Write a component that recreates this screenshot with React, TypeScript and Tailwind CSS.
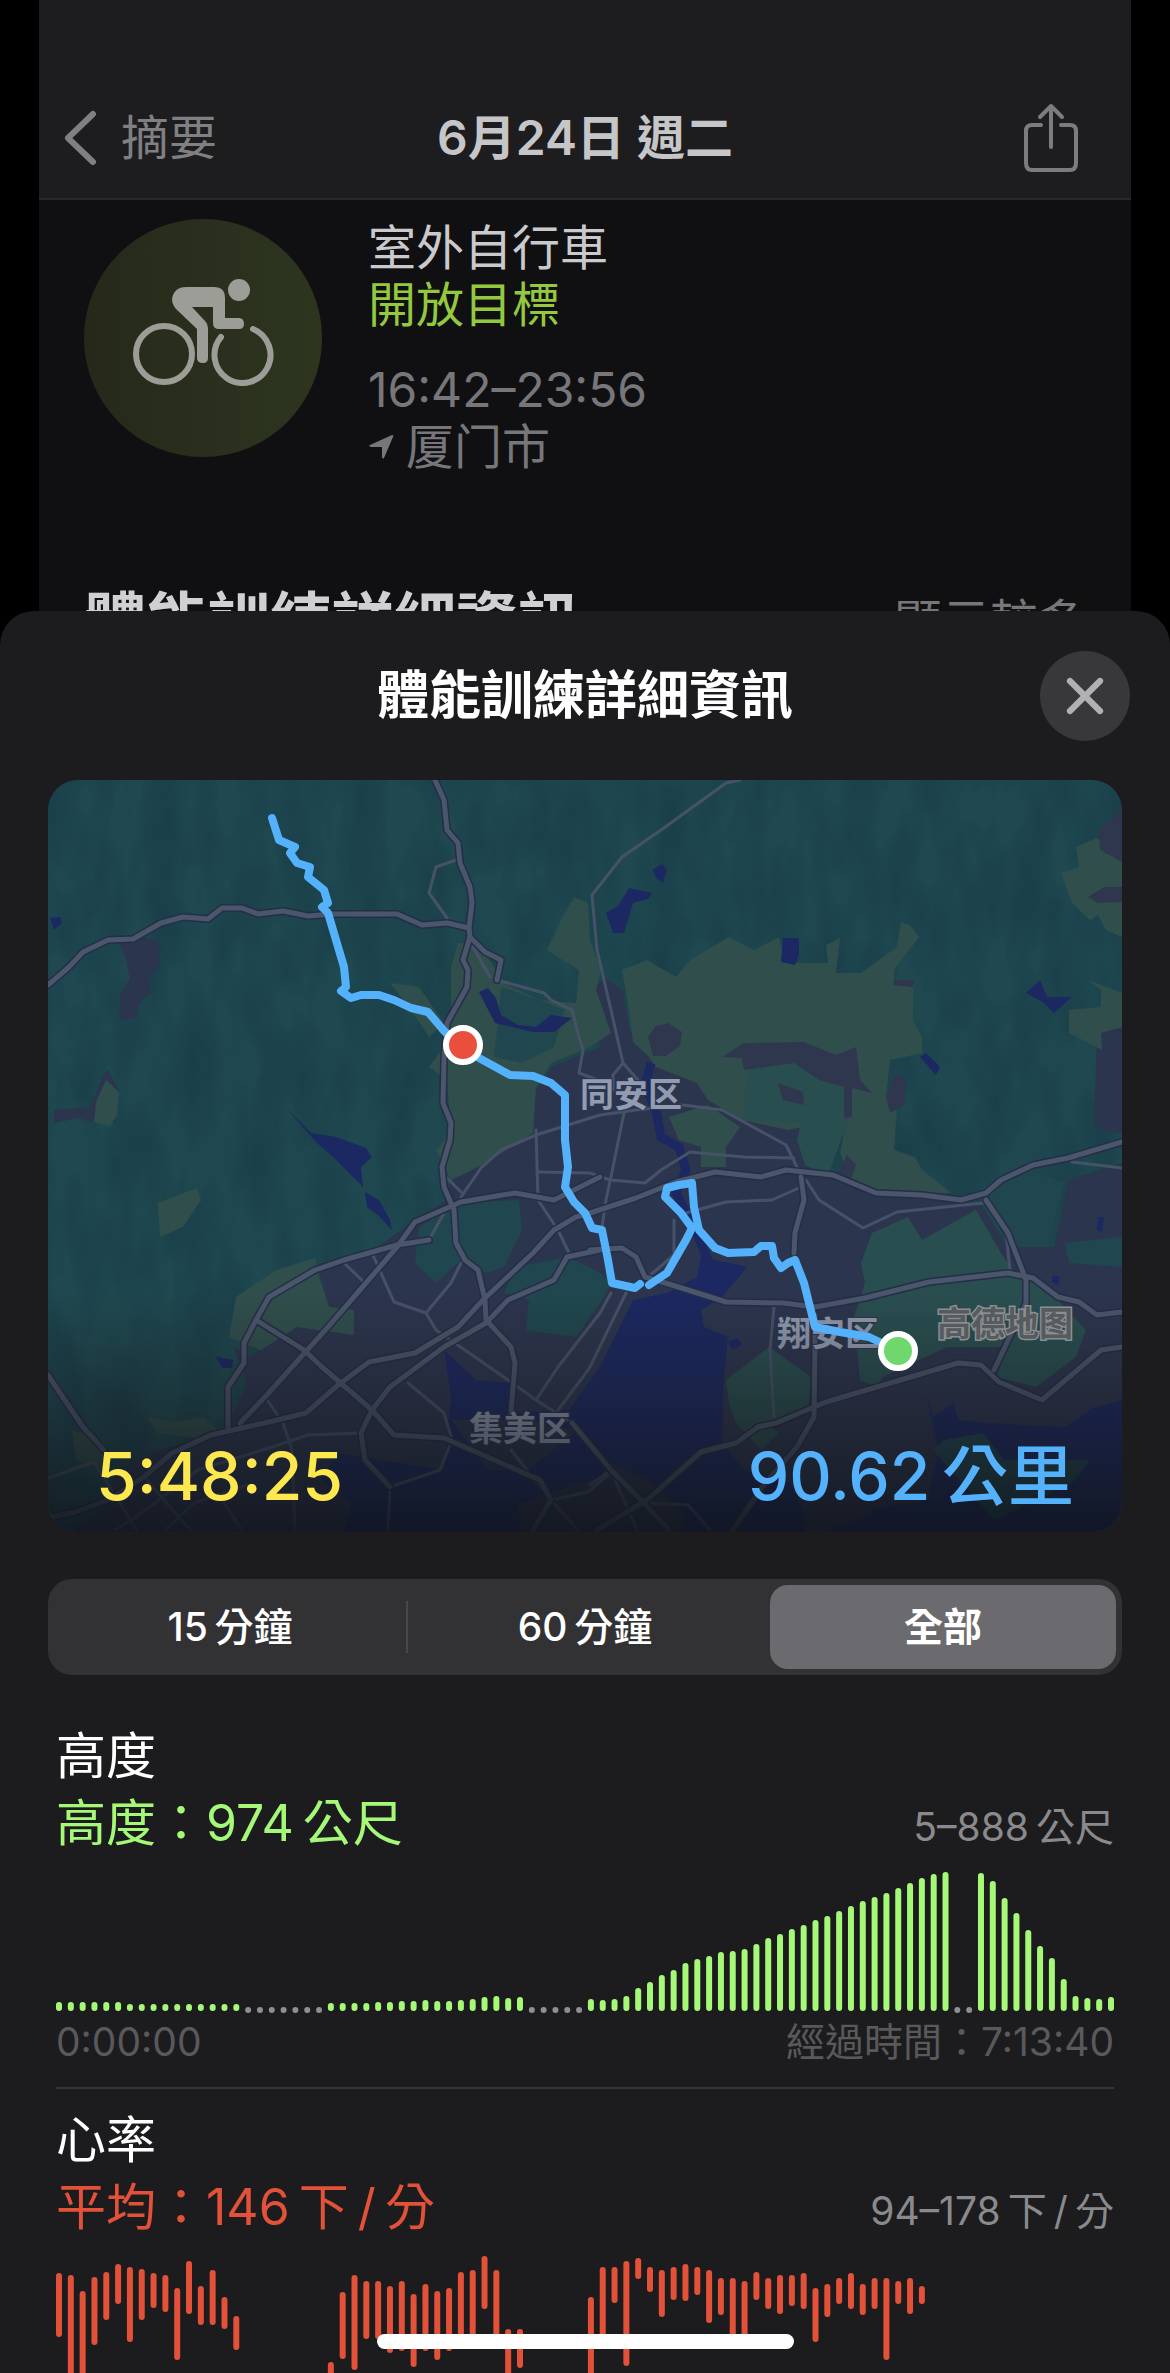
import { X } from "lucide-react"

type Range = [number, number] | null

const altitude = [
  9, 9, 9, 9, 9, 9, 7, 7, 7, 7, 7, 7, 7, 7, 7, 7, 0, 0, 0, 0, 0, 0, 0, 8, 8, 8, 8, 9, 9, 10, 10, 11, 10, 10, 11, 12,
  14, 15, 13, 14, 0, 0, 0, 0, 0, 12, 11, 12, 15, 23, 29, 36, 41, 48, 52, 55, 59, 60, 62, 67, 73, 77, 82, 86, 91, 95,
  100, 105, 110, 114, 118, 123, 128, 133, 137, 139, 0, 0, 138, 130, 113, 98, 81, 65, 53, 32, 15, 13, 12, 14,
]

// top and bottom of every heart rate bar, null where nothing was recorded
const heartRate: Range[] = [
  [17, 81], [19, 130], [35, 130], [21, 89], [16, 64], [8, 48], [11, 86], [13, 64], [17, 52], [19, 56], [32, 104],
  [5, 58], [30, 69], [14, 69], [41, 73], [60, 94], null, null, null, null, null, null, null, [106, 130], [36, 103],
  [19, 114], [25, 83], [25, 83], [30, 97], [25, 95], [38, 111], [28, 95], [35, 104], [32, 95], [16, 85], [14, 85],
  [0, 53], [14, 85], [73, 130], [73, 112], null, null, null, null, null, [41, 130], [11, 85], [11, 47], [5, 110],
  [2, 23], [11, 36], [14, 61], [11, 44], [8, 45], [11, 39], [14, 67], [22, 59], [22, 85], [25, 85], [16, 44],
  [22, 53], [19, 58], [19, 50], [17, 53], [32, 86], [28, 61], [22, 48], [17, 53], [28, 59], [22, 53], [22, 104],
  [25, 48], [22, 58], [30, 48],
]

const chartWidth = 1058
const barStep = (chartWidth - 6) / 89

const urban = [
  "528,277 552,267 545,210 556,197 574,210 583,253 604,277 608,287 649,303 660,320 694,340 753,343 749,360 760,387 803,400 828,413 903,417 935,427 960,467 1006,467 1021,400 1074,383 1074,752 28,752 50,730 70,690 110,670 160,657 178,650 199,603 185,567 203,577 249,547 306,555 306,530 281,527 271,490 321,473 363,443 399,420 403,400 438,383 485,353 488,310 503,287",
  "71,162 85,155 110,160 112,185 100,200 103,213 92,222 88,238 71,240 73,212 82,200 78,180",
  "6,330 42,327 56,293 60,290 71,310 67,343 46,342 30,338 6,343",
  "1049,250 1060,246 1074,248 1074,353 1058,352 1046,343",
]

const olive = [
  "526,117 540,123 542,160 553,190 548,210 563,253 542,267 503,283 488,307 485,353 438,383 403,400 388,370 403,353 399,300 381,287 403,257 403,187 410,163 431,163 456,203 492,220 528,223 531,190 499,170 513,140",
  "574,190 599,180 628,197 642,180 681,157 706,170 731,157 737,183 780,183 778,165 792,158 788,193 813,193 849,167 853,142 862,145 871,157 846,190 846,203 865,207 865,240 874,257 874,273 842,280 838,317 849,327 846,370 867,377 874,390 903,413 828,413 803,400 792,373 799,337 740,350 694,340 660,320 649,303 608,287 600,276 585,262 581,230",
  "1049,58 1074,80 1074,157 1058,150 1050,135 1042,140 1024,123 1013,93 1031,87 1028,67",
  "1040,200 1074,213 1074,247 1053,253 1054,270 1021,253 1021,230 1053,227 1053,210",
  "267,478 228,490 188,517 181,557 213,570 249,547 306,555 306,530 281,527 271,497",
  "110,423 149,408 153,420 135,447 112,457",
  "99,637 125,642 156,637 170,650 146,658 110,653",
  "342,203 371,207 396,243 381,257 363,230",
  "621,337 660,325 692,347 678,367 678,387 653,387 653,367 631,360",
  "24,650 56,662 60,690 28,680",
  "46,342 48,322 58,300 71,312 69,335 62,346",
]

const forest = [
  "453,207 492,220 517,230 506,267 474,283 446,277 449,250",
  "410,423 471,420 474,450 456,487 438,493 413,480 388,503 367,483 371,447",
  "467,487 521,477 552,493 563,503 556,517 528,557 478,550 481,520 456,513",
  "946,403 981,390 1017,403 999,467 971,467 938,430",
  "1017,463 1074,457 1074,487 1021,483",
]

const park = [
  "700,290 746,281 771,300 796,308 800,340 780,396 757,385 749,360 753,343 694,340",
  "824,453 860,437 874,460 928,430 953,473 967,493 1003,513 1038,550 1028,577 988,607 949,597 956,567 899,567 835,597 828,607 812,600 806,537 817,503 813,483",
  "721,567 763,597 760,633 724,647 731,653 713,670 688,643 681,623 678,600",
]

const suburb = [
  "674,277 696,263 756,262 788,275 808,267 812,300 824,313 804,308 804,337 796,338 796,307 771,300 746,283 696,290 694,278",
  "600,257 608,246 620,243 634,252 632,266 618,276 605,276",
  "1067,37 1074,27 1074,82 1052,70 1051,50",
  "1040,117 1056,107 1074,107 1074,122 1050,123",
  "846,200 866,200 864,207 845,205",
  "730,303 755,312 756,325 735,320",
  "848,293 858,300 856,325 842,333 838,317",
  "799,375 808,385 803,400 790,395",
]

const water = [
  "238,328 263,353 288,357 318,368 324,377 313,387 315,407 285,377 268,362",
  "317,412 331,420 342,440 344,450 330,435 319,427",
  "431,212 440,208 448,218 453,235 470,245 488,247 503,235 524,238 506,252 485,252 447,243",
  "604,90 614,84 619,90 615,103 609,99",
  "558,133 570,126 581,108 604,113 600,119 585,123 576,153 565,153",
  "735,158 751,158 751,175 747,185 733,182",
  "978,213 992,200 999,217 1024,217 1006,233 996,223",
  "872,277 878,273 892,287 888,295",
  "653,477 699,487 674,517 653,530 656,547 680,557 676,597 674,663 696,690 742,703 756,733 756,752 296,752 303,723 274,700 288,673 396,690 403,617 396,570 428,600 463,603 467,633 521,630 552,587 585,520 619,513 649,497",
  "878,613 885,637 906,623 910,640 938,643 1017,647 1045,628 1074,620 1074,752 780,752 830,728 880,720 890,670",
  "168,577 185,580 184,588 174,588",
  "2,138 12,137 14,143 6,150",
  "680,562 690,558 694,565 684,570",
  "1004,495 1012,497 1010,505 1004,502",
  "1050,437 1056,437 1054,452 1049,450",
]

const island = ["471,723 552,697 563,683 600,700 635,730 635,752 471,752", "403,640 480,640 530,650 480,690 440,690"]
const bayPark = "896,660 935,653 956,680 1042,680 1024,703 946,740 931,723 885,670"

const highways = [
  "0,205 21,187 35,172 60,160 85,159 113,143 135,137 160,139 174,128 194,128 210,134 235,131 260,136 285,134 349,134 374,145 399,143 421,148",
  "387,0 396,20 399,50 410,63 412,83 422,107 424,123 421,148 422,157 415,180 420,190 419,207 399,243 396,280 395,323 403,343 402,360 394,387 396,407 406,430 408,463 417,480 430,490 437,520 438,540 463,567 467,583 463,633",
  "422,157 437,172 453,180 449,200",
  "1074,362 1020,378 985,385 953,400 938,413 913,420 874,415 828,413 785,395 738,390 713,397 667,392 628,402 588,418 542,433 528,437 506,450 485,473 435,520 410,547 367,573 321,582 290,605 258,633 221,642 163,655 124,673 96,697 60,720 28,732 3,737",
  "552,470 519,477 506,500 460,520 438,543 396,567 342,607 324,630 313,653 317,680 342,707",
  "542,470 574,468 588,477 597,497 624,505 678,522 735,523 767,527 817,518 881,502 960,493 985,498 1010,517 1031,522 1049,535 1074,532",
  "552,397 506,420 467,413 413,422 367,442 349,467 280,547 217,617 192,643",
  "0,595 10,610 35,647 56,670",
  "208,540 256,570 274,587 324,630 346,655 396,658 492,700 503,720 485,750",
  "767,535 767,567 766,637 749,667 717,703 685,750",
  "1074,567 1053,570 994,620 951,602 933,585 910,583 778,622 728,643 710,647 688,663 653,672 599,720 549,750",
  "938,420 960,453 978,500 978,523 946,590",
  "753,397 756,420 747,453 746,473",
  "381,460 349,465 296,480 267,490 221,517 208,540 196,563 196,583 180,607 180,650",
  "524,643 549,673 563,690 596,723 621,750",
]

const streets = [
  "449,200 496,213 503,220 524,230 531,257 535,270 531,293 550,300",
  "408,80 388,87 381,113 399,138",
  "421,160 442,197",
  "692,0 678,3 613,50 574,77 544,115 549,170 563,230 575,283 565,295 565,310",
  "575,283 590,300",
  "413,417 433,388 453,370 488,355 552,335 588,330 635,325 674,330 738,365 753,395",
  "576,333 565,387 558,420 554,447",
  "746,378 696,377 642,372 613,390 597,403 562,400 542,393 490,392",
  "488,350 490,420 510,450 521,473",
  "396,433 381,460",
  "399,398 413,412",
  "324,473 346,522 378,533 388,550 460,600 488,620 524,643",
  "296,483 317,503",
  "413,483 403,503 378,533",
  "360,603 396,633 404,660 392,690 342,707 340,750",
  "217,617 235,643 244,670 247,750",
  "313,653 260,655 221,668 150,690 88,737 67,750",
  "488,620 510,587 552,533 563,513",
  "578,513 542,587 535,597 510,630",
  "726,527 722,570 726,637",
  "758,400 771,420 815,448 849,432 935,423",
  "638,433 678,422 724,420 753,407",
  "626,440 626,475 600,497",
  "1024,382 1074,388",
  "46,682 0,698",
  "46,682 90,752",
  "96,697 142,750",
  "174,720 194,750",
  "117,750 146,723 200,705",
  "463,670 503,720 530,750",
  "503,720 540,712 560,695",
  "563,690 542,705",
  "596,723 640,725 662,750",
  "567,700 590,752",
  "958,453 962,490",
]

const route = [
  "224,38 231,60 247,67 242,73 249,83 262,87 260,97 276,110 280,123 274,127 280,133 288,160 296,187 298,207 293,211 303,218 313,215 331,215 346,220 363,228 380,232 397,252 415,265 431,278 462,295 485,296 503,303 517,315 517,360 520,387 517,407 526,422 537,433 544,448 554,450 560,480 564,503 587,508 592,504",
  "601,505 619,493 638,460 644,448 633,433 617,417 619,408 631,405 644,403 646,427 651,450 667,468 680,473 706,472 713,466 724,466 726,478 733,488 740,483 747,480 756,503 767,547 792,552 821,557 850,571",
]

function Shapes({ items, fill }: { items: string[]; fill: string }) {
  return (
    <g fill={fill}>
      {items.map((points) => (
        <polygon key={points} points={points} />
      ))}
    </g>
  )
}

function Lines({ items, stroke, width }: { items: string[]; stroke: string; width: number }) {
  return (
    <g fill="none" stroke={stroke} strokeWidth={width} strokeLinejoin="round" strokeLinecap="round">
      {items.map((points) => (
        <polyline key={points} points={points} />
      ))}
    </g>
  )
}

function RouteMap() {
  return (
    <svg viewBox="0 0 1074 752" className="block h-auto w-full" role="img" aria-label="路線地圖">
      <defs>
        <linearGradient id="shade" x1="0" y1="0" x2="0" y2="1">
          <stop offset="0.68" stopColor="#1c1c1e" stopOpacity="0" />
          <stop offset="1" stopColor="#10141c" stopOpacity="0.85" />
        </linearGradient>
        <filter id="relief" x="0" y="0" width="100%" height="100%" colorInterpolationFilters="sRGB">
          <feTurbulence type="fractalNoise" baseFrequency="0.03 0.012" numOctaves="3" seed="4" />
          <feColorMatrix values="0 0 0 0 0.08  0 0 0 0 0.2  0 0 0 0 0.26  2 0 0 0 -0.7" />
        </filter>
      </defs>
      <rect width="1074" height="752" fill="#1f4850" />
      <rect width="1074" height="752" filter="url(#relief)" opacity="0.4" />
      <Shapes items={urban} fill="#2c354e" />
      <Shapes items={olive} fill="#304f4c" />
      <Shapes items={forest} fill="#20474f" />
      <Shapes items={park} fill="#294e50" />
      <Shapes items={suburb} fill="#2f374e" />
      <Shapes items={water} fill="#1b2861" />
      <Shapes items={island} fill="#2a334a" />
      <polygon points={bayPark} fill="#1f4850" />
      <polyline
        points="603,283 597,305 608,330 613,357 631,367 638,390 628,413 646,447 660,480"
        fill="none"
        stroke="#1b2861"
        strokeWidth="9"
      />
      <Lines items={streets} stroke="#465268" width={3} />
      <Lines items={highways} stroke="#262d47" width={8} />
      <Lines items={highways} stroke="#4a566c" width={5} />
      <g fill="#929cb1" stroke="#2c354e" strokeWidth="2" paintOrder="stroke" fontSize="34" fontWeight="600">
        <text x="532" y="327">同安区</text>
        <text x="421" y="661">集美区</text>
        <text x="729" y="566">翔安区</text>
      </g>
      <rect width="1074" height="752" fill="url(#shade)" />
      <text
        x="889"
        y="556"
        fontSize="34"
        fontWeight="600"
        fill="#565b5e"
        stroke="#8b8f93"
        strokeWidth="3"
        paintOrder="stroke"
      >
        高德地图
      </text>
      <Lines items={route} stroke="#54b1fb" width={8} />
      <circle cx="415" cy="265" r="17" fill="#ea4f3d" stroke="#fff" strokeWidth="6" />
      <circle cx="850" cy="571" r="17" fill="#6fd76b" stroke="#fff" strokeWidth="6" />
    </svg>
  )
}

function CyclistIcon() {
  return (
    <svg viewBox="0 0 142 108" className="mb-3 w-[142px]" fill="none" stroke="#9c9d97" strokeLinecap="round" aria-hidden="true">
      <circle cx="32" cy="76" r="28" strokeWidth="6" />
      <path d="M89 59A28 28 0 1 0 121 51" strokeWidth="6" />
      <circle cx="107" cy="12" r="11" fill="#9c9d97" stroke="none" />
      <path
        d="M54 9H82Q93 9 93 20V40H107Q112 40 112 46Q112 51 107 51H87Q81 51 81 45V29H60L73 43Q76 46 76 50V80Q76 85 71 85Q65 85 65 80V51L44 31Q40 26 40 21Q42 9 54 9Z"
        fill="#9c9d97"
        stroke="none"
      />
    </svg>
  )
}

function AltitudeChart() {
  return (
    <svg viewBox="0 0 1058 141" className="block h-auto w-full" role="img" aria-label="高度">
      {altitude.map((h, i) =>
        h ? (
          <rect key={i} x={i * barStep} y={139 - h} width="6" height={h} rx="3" fill="#a5f977" />
        ) : (
          <circle key={i} cx={i * barStep + 3} cy="138" r="3" fill="#8e8e93" />
        ),
      )}
    </svg>
  )
}

function HeartRateChart() {
  return (
    <svg viewBox="0 0 1058 118" className="block h-auto w-full" role="img" aria-label="心率">
      {heartRate.map((bar, i) =>
        bar ? (
          <rect key={i} x={i * barStep} y={bar[0]} width="6" height={bar[1] - bar[0]} rx="3" fill="#e25138" />
        ) : null,
      )}
    </svg>
  )
}

function WorkoutSummary() {
  return (
    <div className="mx-[39px] bg-[#101012]">
      <header className="flex h-[200px] items-end border-b-2 border-[#29292b] bg-[#1d1d1f] px-6 pb-6">
        <div className="flex w-full items-center justify-between">
          <button className="flex w-[200px] items-center gap-6 text-[48px] leading-[72px] text-[#808083]">
            <svg viewBox="0 0 34 56" className="h-[56px] w-[34px]" fill="none" stroke="currentColor" strokeWidth="6" strokeLinecap="round" strokeLinejoin="round" aria-hidden="true">
              <path d="M30 4L5 28L30 52" />
            </svg>
            摘要
          </button>
          <h1 className="text-[48px] leading-[72px] font-semibold text-[#c6c6c8]">6月24日 週二</h1>
          <button className="flex w-[200px] justify-end pr-7 text-[#7c7c7f]" aria-label="分享">
            <svg viewBox="0 0 56 70" className="h-[70px] w-[56px]" fill="none" stroke="currentColor" strokeWidth="4" strokeLinecap="round" strokeLinejoin="round" aria-hidden="true">
              <path d="M18 22H9Q3 22 3 28V60Q3 67 9 67H47Q53 67 53 60V28Q53 22 47 22H38M28 44V3M17 14L28 3L39 14" />
            </svg>
          </button>
        </div>
      </header>
      <div className="px-[45px] pt-[19px]">
        <div className="flex gap-[46px]">
          <div className="flex size-[238px] shrink-0 items-center justify-center rounded-full bg-linear-to-r from-[#26291a] to-[#2d351f]">
            <CyclistIcon />
          </div>
          <div className="text-[48px] leading-[57px] text-[#77777b]">
            <p className="text-[#cacacc]">室外自行車</p>
            <p className="text-[#94c83f]">開放目標</p>
            <p className="mt-7">16:42–23:56</p>
            <p className="flex items-center gap-3">
              <svg viewBox="0 0 26 26" className="size-[26px]" fill="currentColor" aria-hidden="true">
                <path d="M24 1Q26 1 25 3L16 24Q15 26 14 23V13H3Q0 12 2 11Z" />
              </svg>
              厦门市
            </p>
          </div>
        </div>
        <div className="mt-[107px] flex items-center justify-between">
          <h2 className="text-[62px] leading-20 font-bold text-[#d0d0d2]">體能訓練詳細資訊</h2>
          <button className="text-[48px] leading-20 text-[#77777b]">顯示較多</button>
        </div>
      </div>
    </div>
  )
}

function RangePicker() {
  return (
    <div className="mt-[47px] grid h-24 grid-cols-3 rounded-3xl bg-[#323235] p-[6px] text-[39px] leading-[48px] font-medium text-white">
      <button className="my-4 border-r-2 border-[#48484b]">15{"\u2009"}分鐘</button>
      <button>60{"\u2009"}分鐘</button>
      <button className="ml-2 rounded-[18px] bg-[#6a6a6f] font-semibold" aria-pressed="true">全部</button>
    </div>
  )
}

function WorkoutDetails() {
  return (
    <main className="relative -mt-[51px] rounded-t-[34px] bg-[#1c1c1e] pt-10">
      <div className="grid grid-cols-[90px_1fr_90px] items-center px-10">
        <h2 className="col-start-2 text-center text-[52px] leading-[72px] font-semibold text-white">體能訓練詳細資訊</h2>
        <button className="flex size-[90px] items-center justify-center rounded-full bg-[#38383b] text-[#b0b0b5]" aria-label="關閉">
          <X size={60} strokeWidth={2.5} />
        </button>
      </div>
      <div className="px-12 pt-[39px]">
        <section className="relative overflow-hidden rounded-[30px]">
          <RouteMap />
          <div className="absolute inset-x-0 bottom-3 flex items-baseline justify-between px-12 text-[66px] leading-[88px] font-medium">
            <span className="text-[#fde84f]">5:48:25</span>
            <span className="text-[#54b1fb]">90.62{"\u2009"}公里</span>
          </div>
        </section>
        <RangePicker />
        <section className="mt-12 px-2">
          <h3 className="text-[50px] leading-[67px] text-white">高度</h3>
          <div className="flex items-baseline justify-between">
            <p className="text-[50px] leading-[67px] text-[#a5f977]">高度：974{"\u2009"}公尺</p>
            <p className="text-[39px] leading-[48px] text-[#8a8a8d]">5–888{"\u2009"}公尺</p>
          </div>
          <div className="mt-[15px]">
            <AltitudeChart />
          </div>
          <div className="mt-1 flex justify-between text-[39px] leading-[50px] text-[#59595c]">
            <span>0:00:00</span>
            <span>經過時間：7:13:40</span>
          </div>
        </section>
        <section className="mx-2 mt-5 border-t-2 border-[#343437] pt-[18px]">
          <h3 className="text-[50px] leading-[67px] text-white">心率</h3>
          <div className="flex items-baseline justify-between">
            <p className="text-[50px] leading-[67px] text-[#e25138]">平均：146{"\u2009"}下{"\u2009"}/{"\u2009"}分</p>
            <p className="text-[39px] leading-[48px] text-[#8a8a8d]">94–178{"\u2009"}下{"\u2009"}/{"\u2009"}分</p>
          </div>
          <div className="mt-[15px]">
            <HeartRateChart />
          </div>
        </section>
      </div>
    </main>
  )
}

export default function App() {
  return (
    <div className="min-h-screen overflow-hidden bg-black font-['Inter','Noto_Sans_CJK_TC',sans-serif]">
      <WorkoutSummary />
      <WorkoutDetails />
      <div className="fixed inset-x-0 bottom-6 flex justify-center">
        <div className="h-[15px] w-[417px] rounded-full bg-white" />
      </div>
    </div>
  )
}
